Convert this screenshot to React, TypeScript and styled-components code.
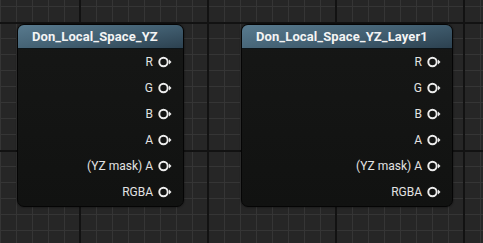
import styled, { createGlobalStyle } from "styled-components";

const GlobalStyle = createGlobalStyle`
  html, body {
    margin: 0;
    padding: 0;
    width: 483px;
    height: 243px;
    overflow: hidden;
  }
  body {
    font-family: Roboto, "Liberation Sans", sans-serif;
    background-color: #262626;
    background-image:
      linear-gradient(to right, #121212 0 2px, transparent 2px),
      linear-gradient(to bottom, #121212 0 2px, transparent 2px),
      linear-gradient(to right, #353535 0 1px, transparent 1px),
      linear-gradient(to bottom, #353535 0 1px, transparent 1px);
    background-size: 128px 128px, 128px 128px, 16px 16px, 16px 16px;
    background-position: 79px 0, 0 22px, 0 0, 0 6px;
  }
`;

const Canvas = styled.div`
  display: flex;
  align-items: flex-start;
  gap: 57px;
  padding: 24px 0 0 17px;
`;

const Node = styled.div<{ $width: number }>`
  width: ${({ $width }) => $width}px;
  border: 1px solid #050505;
  border-radius: 7px;
  background: linear-gradient(to bottom, #161716, #111211);
  box-shadow: 0 0 2px rgba(0, 0, 0, 0.7);
  overflow: hidden;
`;

const Header = styled.div`
  height: 23px;
  display: flex;
  align-items: center;
  padding-left: 14px;
  background: linear-gradient(170deg, #587a8e 0%, #415e70 55%, #2c4150 100%);
  border-bottom: 1px solid #0d1418;
  color: #f4f4f4;
  font-size: 13px;
  font-weight: 700;
  letter-spacing: 0.1px;
`;

const Pins = styled.div`
  display: flex;
  flex-direction: column;
  padding: 0 0 1px;
`;

const Row = styled.div`
  height: 26px;
  display: flex;
  align-items: center;
  justify-content: flex-end;
  gap: 5px;
  padding-right: 11px;
  color: #e2e2e2;
  font-size: 12px;
`;

const Pin = styled.svg`
  width: 14px;
  height: 12px;
  display: block;
`;

const OutPin = () => (
  <Pin viewBox="0 0 14 12">
    <circle cx="5.5" cy="6" r="4.2" fill="none" stroke="#ececec" strokeWidth="2" />
    <path d="M11 3.5 L13.5 6 L11 8.5 Z" fill="#ececec" />
  </Pin>
);

const outputs = ["R", "G", "B", "A", "(YZ mask) A", "RGBA"];

const nodes = [
  { title: "Don_Local_Space_YZ", width: 165 },
  { title: "Don_Local_Space_YZ_Layer1", width: 210 },
];

export default function App() {
  return (
    <>
      <GlobalStyle />
      <Canvas>
        {nodes.map((n) => (
          <Node key={n.title} $width={n.width}>
            <Header>{n.title}</Header>
            <Pins>
              {outputs.map((o) => (
                <Row key={o}>
                  {o}
                  <OutPin />
                </Row>
              ))}
            </Pins>
          </Node>
        ))}
      </Canvas>
    </>
  );
}
